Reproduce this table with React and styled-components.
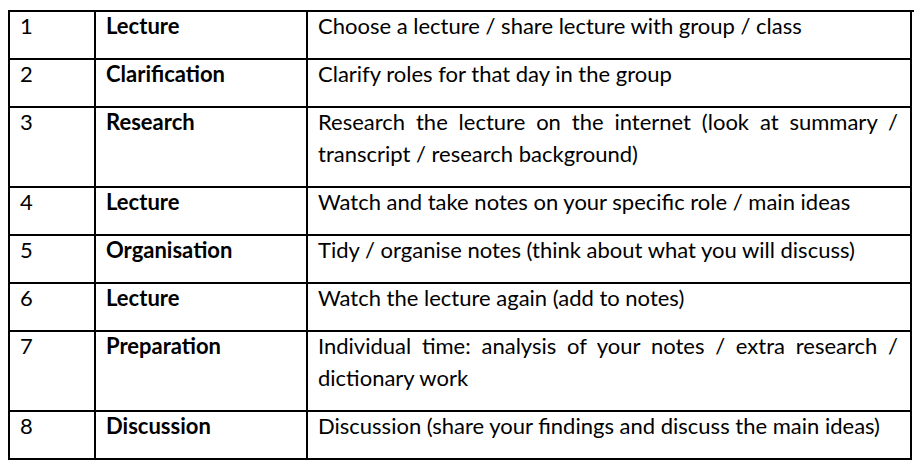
import React from 'react';
import styled, { createGlobalStyle } from 'styled-components';

const GlobalStyle = createGlobalStyle`
    body {
        margin: 0;
        background-color: #ffffff;
        font-family: Lato, "Liberation Sans", sans-serif;
        color: #000000;
    }
`;

const Page = styled.div`
    padding: 10px 0 0 8px;
`;

const Grid = styled.div`
    display: grid;
    grid-template-columns: 86px 212px 604px;
    width: 904px;

    border-top: 2px solid #000;
    border-left: 2px solid #000;
`;

const Cell = styled.div`
    padding: 0 12px 16px 10px;

    border-right: 2px solid #000;
    border-bottom: 2px solid #000;

    font-size: 22px;
    font-weight: ${(props) => (props.bold ? 700 : 400)};
    line-height: 32px;
    text-align: ${(props) => (props.justify ? "justify" : "left")};
`;

const Text = styled.div`
    margin-top: -2px;
`;

const rows = [
    { n: 1, step: "Lecture", text: "Choose a lecture / share lecture with group / class" },
    { n: 2, step: "Clarification", text: "Clarify roles for that day in the group" },
    { n: 3, step: "Research", text: "Research the lecture on the internet (look at summary / transcript / research background)" },
    { n: 4, step: "Lecture", text: "Watch and take notes on your specific role / main ideas" },
    { n: 5, step: "Organisation", text: "Tidy / organise notes (think about what you will discuss)" },
    { n: 6, step: "Lecture", text: "Watch the lecture again (add to notes)" },
    { n: 7, step: "Preparation", text: "Individual time: analysis of your notes / extra research / dictionary work" },
    { n: 8, step: "Discussion", text: "Discussion (share your findings and discuss the main ideas)" },
];

const App = () => {
    return (
        <Page>
            <GlobalStyle />
            <Grid>
                {rows.map((row) => (
                    <React.Fragment key={row.n}>
                        <Cell><Text>{row.n}</Text></Cell>
                        <Cell bold><Text>{row.step}</Text></Cell>
                        <Cell justify><Text>{row.text}</Text></Cell>
                    </React.Fragment>
                ))}
            </Grid>
        </Page>
    );
};

export default App;
